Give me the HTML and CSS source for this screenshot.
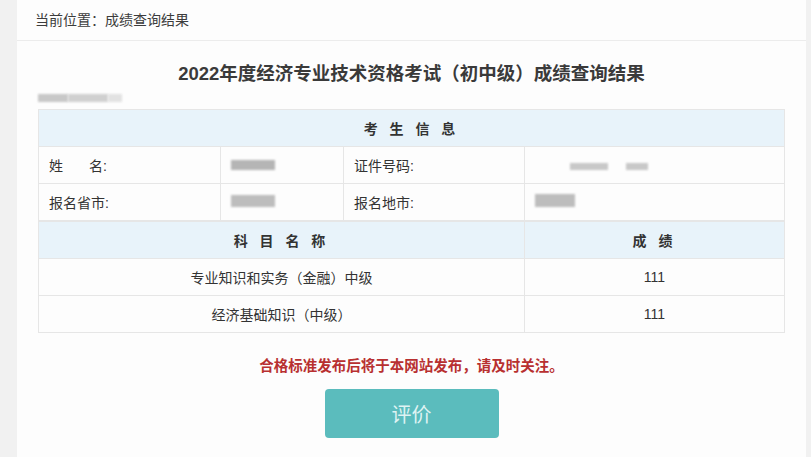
FILE: index.html
```html
<!DOCTYPE html>
<html lang="zh-CN">
<head>
    <meta charset="UTF-8">
    <meta name="viewport" content="width=device-width, initial-scale=1.0">
    <title>成绩查询结果</title>
    <link rel="stylesheet" href="styles.css">
</head>
<body>
    <div class="page">
        <div class="crumb">当前位置：成绩查询结果</div>
        <div class="panel">
            <h1 class="title">2022年度经济专业技术资格考试（初中级）成绩查询结果</h1>
            <div class="sub"><span class="blur b1"></span><span class="blur b2"></span><span class="blur b3"></span></div>
            <table class="info">
                <tr class="head">
                    <td colspan="4" class="spaced">考 生 信 息</td>
                </tr>
                <tr>
                    <td class="label c1"><span class="gap">姓</span>名:</td>
                    <td class="val c2"><span class="blur v1"></span></td>
                    <td class="label c3">证件号码:</td>
                    <td class="val c4"><span class="blur v3"></span><span class="blur v4"></span></td>
                </tr>
                <tr>
                    <td class="label">报名省市:</td>
                    <td class="val"><span class="blur v2"></span></td>
                    <td class="label">报名地市:</td>
                    <td class="val"><span class="blur v5"></span></td>
                </tr>
            </table>
            <table class="info scores">
                <tr class="head">
                    <td class="s1 spaced">科 目 名 称</td>
                    <td class="s2 spaced">成 绩</td>
                </tr>
                <tr>
                    <td>专业知识和实务（金融）中级</td>
                    <td>111</td>
                </tr>
                <tr>
                    <td>经济基础知识（中级）</td>
                    <td>111</td>
                </tr>
            </table>
            <p class="note">合格标准发布后将于本网站发布，请及时关注。</p>
            <div class="actions">
                <button class="rate">评价</button>
            </div>
        </div>
    </div>
</body>
</html>
```

FILE: styles.css
```css
*{
    box-sizing: border-box;
}
body{
    margin: 0;
    background: #f1f1f1;
    font-family: "Liberation Sans", "Noto Sans CJK SC", sans-serif;
    color: #333;
}
.page{
    margin: 0 5px 0 17px;
    background: #fdfdfd;
    height: 457px;
}
.crumb{
    height: 41px;
    padding: 9px 0 0 18px;
    font-size: 14px;
    color: #3c3c3c;
    border-bottom: 1px solid #ececec;
}
.panel{
    padding: 0 21px;
}
.title{
    margin: 0;
    padding-top: 18px;
    height: 48px;
    text-align: center;
    font-size: 18.5px;
    color: #3a3a3a;
}
.sub{
    display: flex;
    height: 20px;
    padding-top: 5px;
}
.blur{
    display: inline-block;
    background: #c8c8c8;
    filter: blur(1.2px);
}
.b1{ width: 30px; height: 8px; }
.b2{ width: 40px; height: 8px; background: #d0d0d0; }
.b3{ width: 14px; height: 8px; background: #e2e2e2; }
.v1{ width: 44px; height: 10px; background: #b5b5b5; }
.v2{ width: 44px; height: 12px; background: #bdbdbd; }
.v3{ width: 38px; height: 7px; margin: 5px 18px 0 35px; }
.v4{ width: 22px; height: 7px; margin-top: 5px; }
.v5{ width: 40px; height: 13px; background: #bdbdbd; }
.info{
    width: 747px;
    border-collapse: collapse;
    font-size: 14px;
    color: #333;
}
.info td{
    border: 1px solid #e6e6e6;
    height: 37px;
    padding: 0 10px;
}
.gap{
    margin-right: 26px;
}
.head td{
    background: #e8f3fa;
    text-align: center;
    font-weight: bold;
    font-size: 14px;
}
.spaced{
    letter-spacing: 4px;
}
.c1{ width: 182px; }
.c2{ width: 123px; }
.c3{ width: 181px; }
.scores td{
    text-align: center;
}
.s1{ width: 486px; }
.note{
    margin: 21px 0 0;
    text-align: center;
    color: #b83030;
    font-size: 14.5px;
    font-weight: bold;
}
.actions{
    display: flex;
    justify-content: center;
    padding-top: 14px;
}
.rate{
    width: 174px;
    height: 49px;
    border: 0;
    border-radius: 4px;
    background: #5bbcbd;
    color: #dff3f3;
    font-size: 20px;
    font-family: "Noto Sans CJK SC", sans-serif;
}
```
